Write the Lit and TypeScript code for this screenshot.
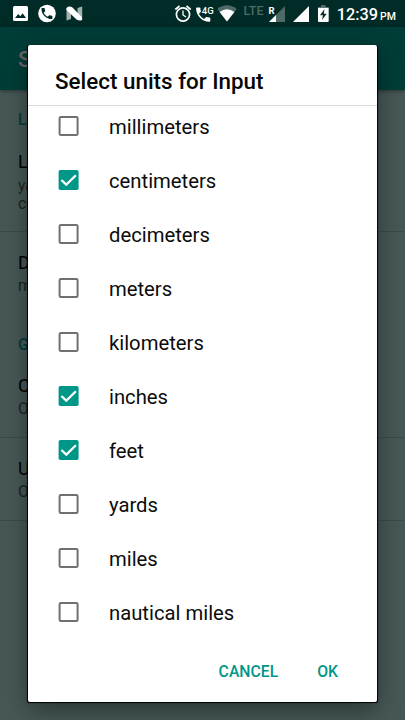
import { LitElement, html, svg, css } from "lit";
import { customElement, property, state } from "lit/decorators.js";

@customElement("status-bar")
class StatusBar extends LitElement {
  static styles = css`
    :host { display: block; height: 27px; background: #002b27; }
    svg { display: block; width: 405px; height: 27px; }
    .small { font: 500 9.5px Roboto, sans-serif; stroke: #002b27; stroke-width: 1.5px; paint-order: stroke; }
    .roam { font: 700 9.5px Roboto, sans-serif; }
    .lte { font: 500 13px Roboto, sans-serif; }
    .clock { font: 500 16.3px Roboto, sans-serif; }
    .half { font: 500 10.5px Roboto, sans-serif; }
  `;
  render() {
    return html`<svg viewBox="0 0 405 27" fill="#fff">
      <rect x="13" y="6" width="15" height="15" rx="1.5" />
      <path d="M15 18 L18.2 14 L20.3 16.3 L22.6 13.2 L26 18Z" fill="#002b27" />
      <circle cx="47" cy="13.5" r="8.8" />
      <path transform="translate(39.6 6.2) scale(.61)" fill="#002b27"
        d="M6.600 10.800c1.400 2.800 3.800 5.100 6.600 6.600l2.200-2.200c.3-.3.7-.4 1-.2 1.100.4 2.300.6 3.600.6.6 0 1 .4 1 1V20c0 .6-.4 1-1 1C10.600 21 3 13.400 3 4c0-.6.4-1 1-1h3.500c.6 0 1 .4 1 1 0 1.200.2 2.400.6 3.600.1.3 0 .7-.2 1z" />
      <path d="M66.500 8 L71 8 V19 L66.500 20.500Z M77.500 8 L82.200 6.500 V20 L77.500 18Z" fill="#a3b1af" />
      <path d="M66.500 8 Q69 5.500 72.500 7.500 L82 17.300 V20 Q79.500 21.300 76.500 19.500 L66.500 10Z" />
      <g fill="none" stroke="#fff" stroke-width="1.700">
        <circle cx="183" cy="14.500" r="6.600" />
        <path d="M183 10.500 V15 L186 17" stroke-width="1.300" />
        <path d="M175.300 9.500 L179.500 6 M190.700 9.500 L186.500 6" />
      </g>
      <path transform="translate(193.700 5.200) scale(.79)"
        d="M6.600 10.800c1.400 2.800 3.800 5.100 6.600 6.600l2.200-2.200c.3-.3.7-.4 1-.2 1.100.4 2.300.6 3.600.6.6 0 1 .4 1 1V20c0 .6-.4 1-1 1C10.600 21 3 13.400 3 4c0-.6.4-1 1-1h3.500c.6 0 1 .4 1 1 0 1.200.2 2.400.6 3.600.1.3 0 .7-.2 1z" />
      <text class="small" x="201.800" y="13.500">4G</text>
      <path d="M227 21.500 L217.300 9 Q227 1.500 236.700 9Z" fill="#4d6a67" />
      <path d="M227 21.500 L219.600 12 Q227 6.500 234.400 12Z" />
      <text class="lte" x="243.500" y="15" textLength="20" lengthAdjust="spacingAndGlyphs" fill="#4d6a67">LTE</text>
      <text class="roam" x="268.500" y="13.500">R</text>
      <path d="M285 6 V22 H269Z" fill="#4d6a67" />
      <path d="M276 15 V22 H269Z" />
      <path d="M309 6 V22 H293Z" />
      <path d="M318 8 V7 H321 V5.200 H325.500 V7 H328.700 V8Z" fill="#5c7673" />
      <path d="M318 8 H328.700 V21 Q328.700 22 327.700 22 H319 Q318 22 318 21Z" />
      <path d="M324.500 9 L320 15.200 H323 L322 20 L326.700 13.700 H323.800Z" fill="#002b27" />
      <text class="clock" x="336.800" y="20">12:39</text>
      <text class="half" x="380" y="20">PM</text>
    </svg>`;
  }
}

@customElement("settings-page")
class SettingsPage extends LitElement {
  static styles = css`
    :host { display: block; }
    .bar {
      height: 63px; box-sizing: border-box; padding-left: 18px;
      display: flex; align-items: center;
      background: #003d37; color: #666; font-size: 22.5px; font-weight: 500;
      box-shadow: 0 1px 4px rgba(0, 0, 0, 0.4);
    }
    .head, .item { padding-left: 18px; box-sizing: border-box; }
    .head { color: #003d37; font-size: 15.75px; font-weight: 500; line-height: 18px; padding-top: 21px; height: 48px; }
    .item { border-bottom: 1px solid #3b4b49; color: #000; }
    .name { font-size: 18px; line-height: 22px; padding-top: 13px; }
    .roomy .name { padding-top: 20px; }
    .desc { font-size: 15.75px; line-height: 18px; color: #1d2423; padding-top: 3px; }
    .h94 { height: 94px; }
    .h94 .desc { padding-top: 4px; }
    .h76 { height: 76px; }
    .h83 { height: 83px; }
    .last { border: 0; height: 82px; }
    .gap { padding-top: 22px; }
  `;
  render() {
    return html`
      <div class="bar">S</div>
      <div class="head">Le</div>
      <div class="item h94"><div class="name">L</div><div class="desc">ya<br />ce</div></div>
      <div class="item roomy last"><div class="name">D</div><div class="desc">m</div></div>
      <div class="head gap">G</div>
      <div class="item h76"><div class="name">C</div><div class="desc">O</div></div>
      <div class="item roomy h83"><div class="name">U</div><div class="desc">O</div></div>`;
  }
}

@customElement("unit-row")
class UnitRow extends LitElement {
  @property() label = "";
  @property({ type: Boolean }) checked = false;
  static styles = css`
    :host { display: flex; align-items: center; height: 54px; padding-left: 27px; gap: 27px; cursor: pointer; }
    svg { width: 27px; height: 27px; display: block; }
    span { font-size: 20.25px; line-height: 24px; padding-top: 2px; color: #0c0c0c; }
  `;
  render() {
    return html`<svg viewBox="0 0 27 27">
        ${this.checked
          ? svg`<rect x="3.600" y="3" width="20" height="20" rx="1.800" fill="#009688" />
              <path d="M6.400 13 L11.300 17.600 L20.900 8.200" fill="none" stroke="#fff" stroke-width="2.300" />`
          : svg`<rect x="4.600" y="4" width="18" height="18" rx="1.200" fill="none" stroke="#707070" stroke-width="2" />`}
      </svg>
      <span>${this.label}</span>`;
  }
}

@customElement("app-root")
class AppRoot extends LitElement {
  @state() private selected = new Set(["centimeters", "inches", "feet"]);
  private units = ["millimeters", "centimeters", "decimeters", "meters", "kilometers", "inches", "feet", "yards", "miles", "nautical miles"];

  static styles = css`
    :host {
      display: block; position: relative; width: 405px; height: 720px; overflow: hidden;
      background: #465856; font-family: Roboto, sans-serif;
    }
    .dialog {
      position: absolute; left: 28px; top: 45px; width: 349px; height: 657px;
      display: flex; flex-direction: column; background: #fff; border-radius: 2px;
      box-shadow: 0 0.5px 1px 0.5px #000, 0 8px 24px rgba(0, 0, 0, 0.4);
    }
    .title {
      height: 61px; box-sizing: border-box; padding: 22px 0 0 27px; flex: none;
      font-size: 22.4px; line-height: 28px; font-weight: 500; color: #080808;
      border-bottom: 1px solid #dcdcdc;
    }
    .list { height: 533px; overflow: hidden; flex: none; }
    .scroll { margin-top: -7px; }
    .actions {
      flex: 1; display: flex; justify-content: flex-end; align-items: center;
      gap: 39px; padding: 1px 39px 0 0;
      color: #009688; font-size: 15.75px; font-weight: 500;
    }
  `;

  private toggle(u: string) {
    const next = new Set(this.selected);
    next.has(u) ? next.delete(u) : next.add(u);
    this.selected = next;
  }

  render() {
    return html`
      <status-bar></status-bar>
      <settings-page></settings-page>
      <div class="dialog">
        <div class="title">Select units for Input</div>
        <div class="list"><div class="scroll">
          ${this.units.map((u) => html`<unit-row .label=${u} .checked=${this.selected.has(u)} @click=${() => this.toggle(u)}></unit-row>`)}
        </div></div>
        <div class="actions"><span>CANCEL</span><span>OK</span></div>
      </div>`;
  }
}
